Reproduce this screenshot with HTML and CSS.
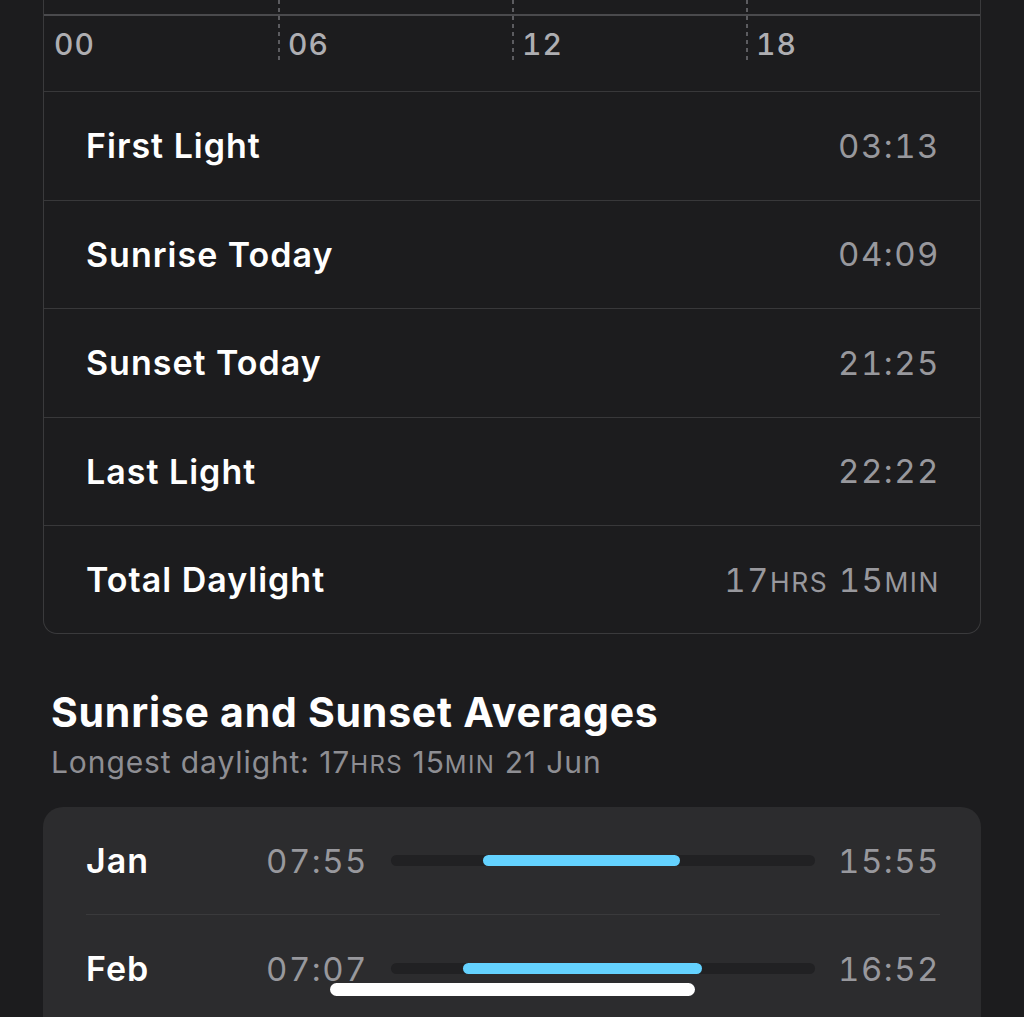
FILE: index.html
```html
<!DOCTYPE html>
<html lang="en">
<head>
    <meta charset="UTF-8">
    <meta name="viewport" content="width=device-width, initial-scale=1.0">
    <title>Sunrise &amp; Sunset</title>
    <link rel="stylesheet" href="styles.css">
</head>
<body>
    <div class="page">
        <div class="card daylight">
            <div class="chart">
                <div class="tick">00</div>
                <div class="tick">06</div>
                <div class="tick">12</div>
                <div class="tick">18</div>
            </div>
            <div class="row"><span class="label">First Light</span><span class="value">03:13</span></div>
            <div class="row"><span class="label">Sunrise Today</span><span class="value">04:09</span></div>
            <div class="row"><span class="label">Sunset Today</span><span class="value">21:25</span></div>
            <div class="row"><span class="label">Last Light</span><span class="value">22:22</span></div>
            <div class="row"><span class="label">Total Daylight</span><span class="value">17<small>hrs</small> 15<small>min</small></span></div>
        </div>

        <div class="section-head">
            <h2>Sunrise and Sunset Averages</h2>
            <p>Longest daylight: 17<small>hrs</small> 15<small>min</small> 21 Jun</p>
        </div>

        <div class="card averages">
            <div class="month">
                <span class="label">Jan</span>
                <span class="value">07:55</span>
                <div class="track"><div class="fill" style="margin-left: 21.7%; width: 46.4%"></div></div>
                <span class="value end">15:55</span>
            </div>
            <div class="month">
                <span class="label">Feb</span>
                <span class="value">07:07</span>
                <div class="track"><div class="fill" style="margin-left: 17%; width: 56.4%"></div></div>
                <span class="value end">16:52</span>
            </div>
        </div>
    </div>
    <div class="home-bar"></div>
</body>
</html>
```

FILE: styles.css
```css
* {
    margin: 0;
    padding: 0;
    box-sizing: border-box;
    font-family: Inter, 'Noto Sans', 'Liberation Sans', sans-serif;
}
html, body { height: 100%; overflow: hidden; }
body { background: #1c1c1e; color: #fff; }
.page { padding: 0 43px; }

.daylight {
    border: 1px solid #3a3a3c;
    border-top: none;
    border-radius: 0 0 14px 14px;
}

/* day timeline */
.chart {
    display: grid;
    grid-template-columns: repeat(4, 1fr);
    height: 92px;
    border-bottom: 1px solid #38383a;
    background: linear-gradient(#4a4a4d, #4a4a4d) 0 14px / 100% 2px no-repeat;
}
.tick {
    padding: 24px 0 0 10px;
    font-size: 30px;
    font-weight: 500;
    line-height: 40px;
    letter-spacing: 1px;
    font-variant-numeric: tabular-nums;
    color: #aeaeb2;
    background: repeating-linear-gradient(to bottom, #5c5c60 0 4px, transparent 4px 8px) left top / 2px 63px no-repeat;
}
.tick:first-child { background: none; }

.row {
    display: flex;
    justify-content: space-between;
    align-items: center;
    height: 108.5px;
    padding: 0 40px 0 42px;
    border-bottom: 1px solid #38383a;
}
.row:last-child { border-bottom: none; height: 107px; }

.label { font-size: 34px; font-weight: 600; letter-spacing: 1px; color: #fff; }
.value {
    font-size: 33px;
    letter-spacing: 1.5px;
    font-variant-numeric: tabular-nums;
    color: #98989d;
}
small { font-size: 0.8em; text-transform: uppercase; letter-spacing: 0.06em; }

.section-head { padding: 54px 8px 22px; }
.section-head h2 { font-size: 41px; font-weight: 700; line-height: 48px; letter-spacing: 0.75px; }
.section-head p {
    font-size: 30px;
    line-height: 40px;
    letter-spacing: 0.9px;
    color: #8e8e93;
    margin-top: 6px;
}

/* monthly averages */
.averages {
    background: #2c2c2e;
    border-radius: 20px;
    padding: 0 41px 120px 43px;
}
.month {
    display: grid;
    grid-template-columns: 157px auto 1fr auto;
    column-gap: 23px;
    align-items: center;
    height: 108px;
    border-bottom: 1px solid #3a3a3c;
}
.month .end { text-align: right; }
.track {
    height: 11px;
    border-radius: 6px;
    background: #212123;
}
.fill {
    height: 100%;
    border-radius: 6px;
    background: #64d2ff;
}

.home-bar {
    position: fixed;
    left: 330px;
    bottom: 21px;
    width: 365px;
    height: 13px;
    border-radius: 7px;
    background: #fff;
}
```
